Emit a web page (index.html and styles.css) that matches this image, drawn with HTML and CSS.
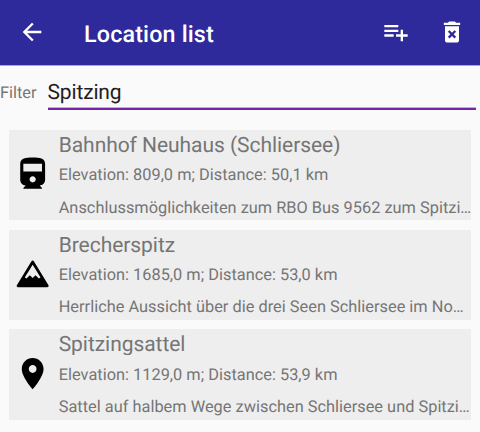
FILE: index.html
```html
<!DOCTYPE html>
<html lang="en">
<head>
<meta charset="utf-8">
<title>Location list</title>
<link rel="stylesheet" href="styles.css">
</head>
<body>
<header class="bar">
  <svg class="bar-icon" viewBox="0 0 24 24"><path d="M20 11H7.83l5.59-5.59L12 4l-8 8 8 8 1.41-1.41L7.83 13H20v-2z"/></svg>
  <h1 class="bar-title">Location list</h1>
  <svg class="bar-icon" viewBox="0 0 24 24"><path d="M14 10H2v2h12v-2zm0-4H2v2h12V6zm4 8v-4h-2v4h-4v2h4v4h2v-4h4v-2h-4zM2 16h8v-2H2v2z"/></svg>
  <svg class="bar-icon bar-icon-last" viewBox="0 0 24 24"><path d="M6 19c0 1.1.9 2 2 2h8c1.1 0 2-.9 2-2V7H6v12zm2.46-7.12l1.41-1.41L12 12.59l2.12-2.12 1.41 1.41L13.41 14l2.12 2.12-1.41 1.41L12 15.41l-2.12 2.12-1.41-1.41L10.59 14l-2.13-2.12zM15.5 4l-1-1h-5l-1 1H5v2h14V4z"/></svg>
</header>
<div class="filter">
  <span class="filter-label">Filter</span>
  <div class="filter-field">Spitzing</div>
</div>
<main class="list">
  <article class="card">
    <svg class="card-icon" viewBox="0 0 24 24"><path d="M4 15.5C4 17.43 5.57 19 7.5 19L6 20.5v.5h12v-.5L16.5 19c1.93 0 3.5-1.57 3.5-3.5V5c0-3.5-3.58-4-8-4s-8 .5-8 4v10.5zm8 1.5c-1.1 0-2-.9-2-2s.9-2 2-2 2 .9 2 2-.9 2-2 2zm6-7H6V5h12v5z"/></svg>
    <div class="card-text">
      <h2 class="name">Bahnhof Neuhaus (Schliersee)</h2>
      <p class="line">Elevation: 809,0 m; Distance: 50,1 km</p>
      <p class="line note">Anschlussmöglichkeiten zum RBO Bus 9562 zum Spitzi…</p>
    </div>
  </article>
  <article class="card">
    <svg class="card-icon" viewBox="0 0 24 24"><path class="outline" d="M12 3.800L2.600 19.200h18.800z"/><path d="M2.600 19.200L6.200 13.400l1.800 1 2.200-2.100 1.800 1.800 1.800-1.800 2.200 2.100 1.800-1 3.600 5.800z"/></svg>
    <div class="card-text">
      <h2 class="name">Brecherspitz</h2>
      <p class="line">Elevation: 1685,0 m; Distance: 53,0 km</p>
      <p class="line note">Herrliche Aussicht über die drei Seen Schliersee im No…</p>
    </div>
  </article>
  <article class="card">
    <svg class="card-icon" viewBox="0 0 24 24"><path d="M12 2C8.130 2 5 5.130 5 9c0 5.250 7 13 7 13s7-7.750 7-13c0-3.870-3.130-7-7-7zm0 9.500c-1.380 0-2.500-1.120-2.500-2.500s1.120-2.500 2.500-2.500 2.500 1.120 2.500 2.500-1.120 2.500-2.500 2.500z"/></svg>
    <div class="card-text">
      <h2 class="name">Spitzingsattel</h2>
      <p class="line">Elevation: 1129,0 m; Distance: 53,9 km</p>
      <p class="line note">Sattel auf halbem Wege zwischen Schliersee und Spitzi…</p>
    </div>
  </article>
</main>
</body>
</html>
```
FILE: styles.css
```css
* {
  box-sizing: border-box;
}

body {
  margin: 0;
  height: 432px;
  overflow: hidden;
  background: #fafafa;
  color: #757575;
  font-family: Roboto, "Liberation Sans", sans-serif;
  text-rendering: geometricPrecision;
}

h1,
h2,
p {
  margin: 0;
}

.bar {
  display: flex;
  align-items: center;
  height: 66px;
  padding: 0 14px 0 18px;
  border-bottom: 1px solid #a9a6d6;
  background: #2e2a9c;
  color: #fff;
}

.bar-icon {
  flex: none;
  width: 28px;
  height: 28px;
  margin-bottom: 1px;
  fill: currentColor;
}

.bar-icon-last {
  margin-left: 28px;
}

.bar-title {
  flex: 1;
  margin-left: 38px;
  padding-top: 2px;
  font-size: 23.33px;
  font-weight: 500;
  letter-spacing: 0.15px;
  line-height: 28px;
}

.filter {
  display: flex;
  align-items: flex-start;
  height: 64px;
  padding: 12px 4px 0 0;
}

.filter-label {
  width: 47.5px;
  padding-top: 5px;
  font-size: 16.33px;
  line-height: 20px;
}

.filter-field {
  flex: 1;
  height: 32px;
  border-bottom: 2px solid #7326a8;
  box-shadow: inset 0 -1px #c9aade;
  color: #212121;
  font-size: 21px;
  letter-spacing: -0.15px;
  line-height: 30px;
}

.list {
  display: grid;
  grid-template-columns: minmax(0, 1fr);
  gap: 9.3px;
  padding: 0 9.3px;
}

.card {
  display: flex;
  align-items: center;
  height: 90.4px;
  padding-left: 4.9px;
  background: #eee;
}

.card-icon {
  flex: none;
  width: 37.33px;
  height: 37.33px;
  margin-top: -1px;
  fill: #000;
}

.outline {
  fill: none;
  stroke: #000;
  stroke-width: 1.8;
  stroke-linejoin: round;
}

.card-text {
  align-self: flex-start;
  min-width: 0;
  margin-left: 7.2px;
}

.name {
  height: 26px;
  overflow: hidden;
  font-size: 21px;
  font-weight: 400;
  letter-spacing: -0.05px;
  line-height: 32px;
}

.line {
  margin-top: 9.2px;
  font-size: 16.33px;
  letter-spacing: 0.02px;
  line-height: 20px;
  white-space: nowrap;
}

.note {
  margin-top: 12.6px;
}
```
